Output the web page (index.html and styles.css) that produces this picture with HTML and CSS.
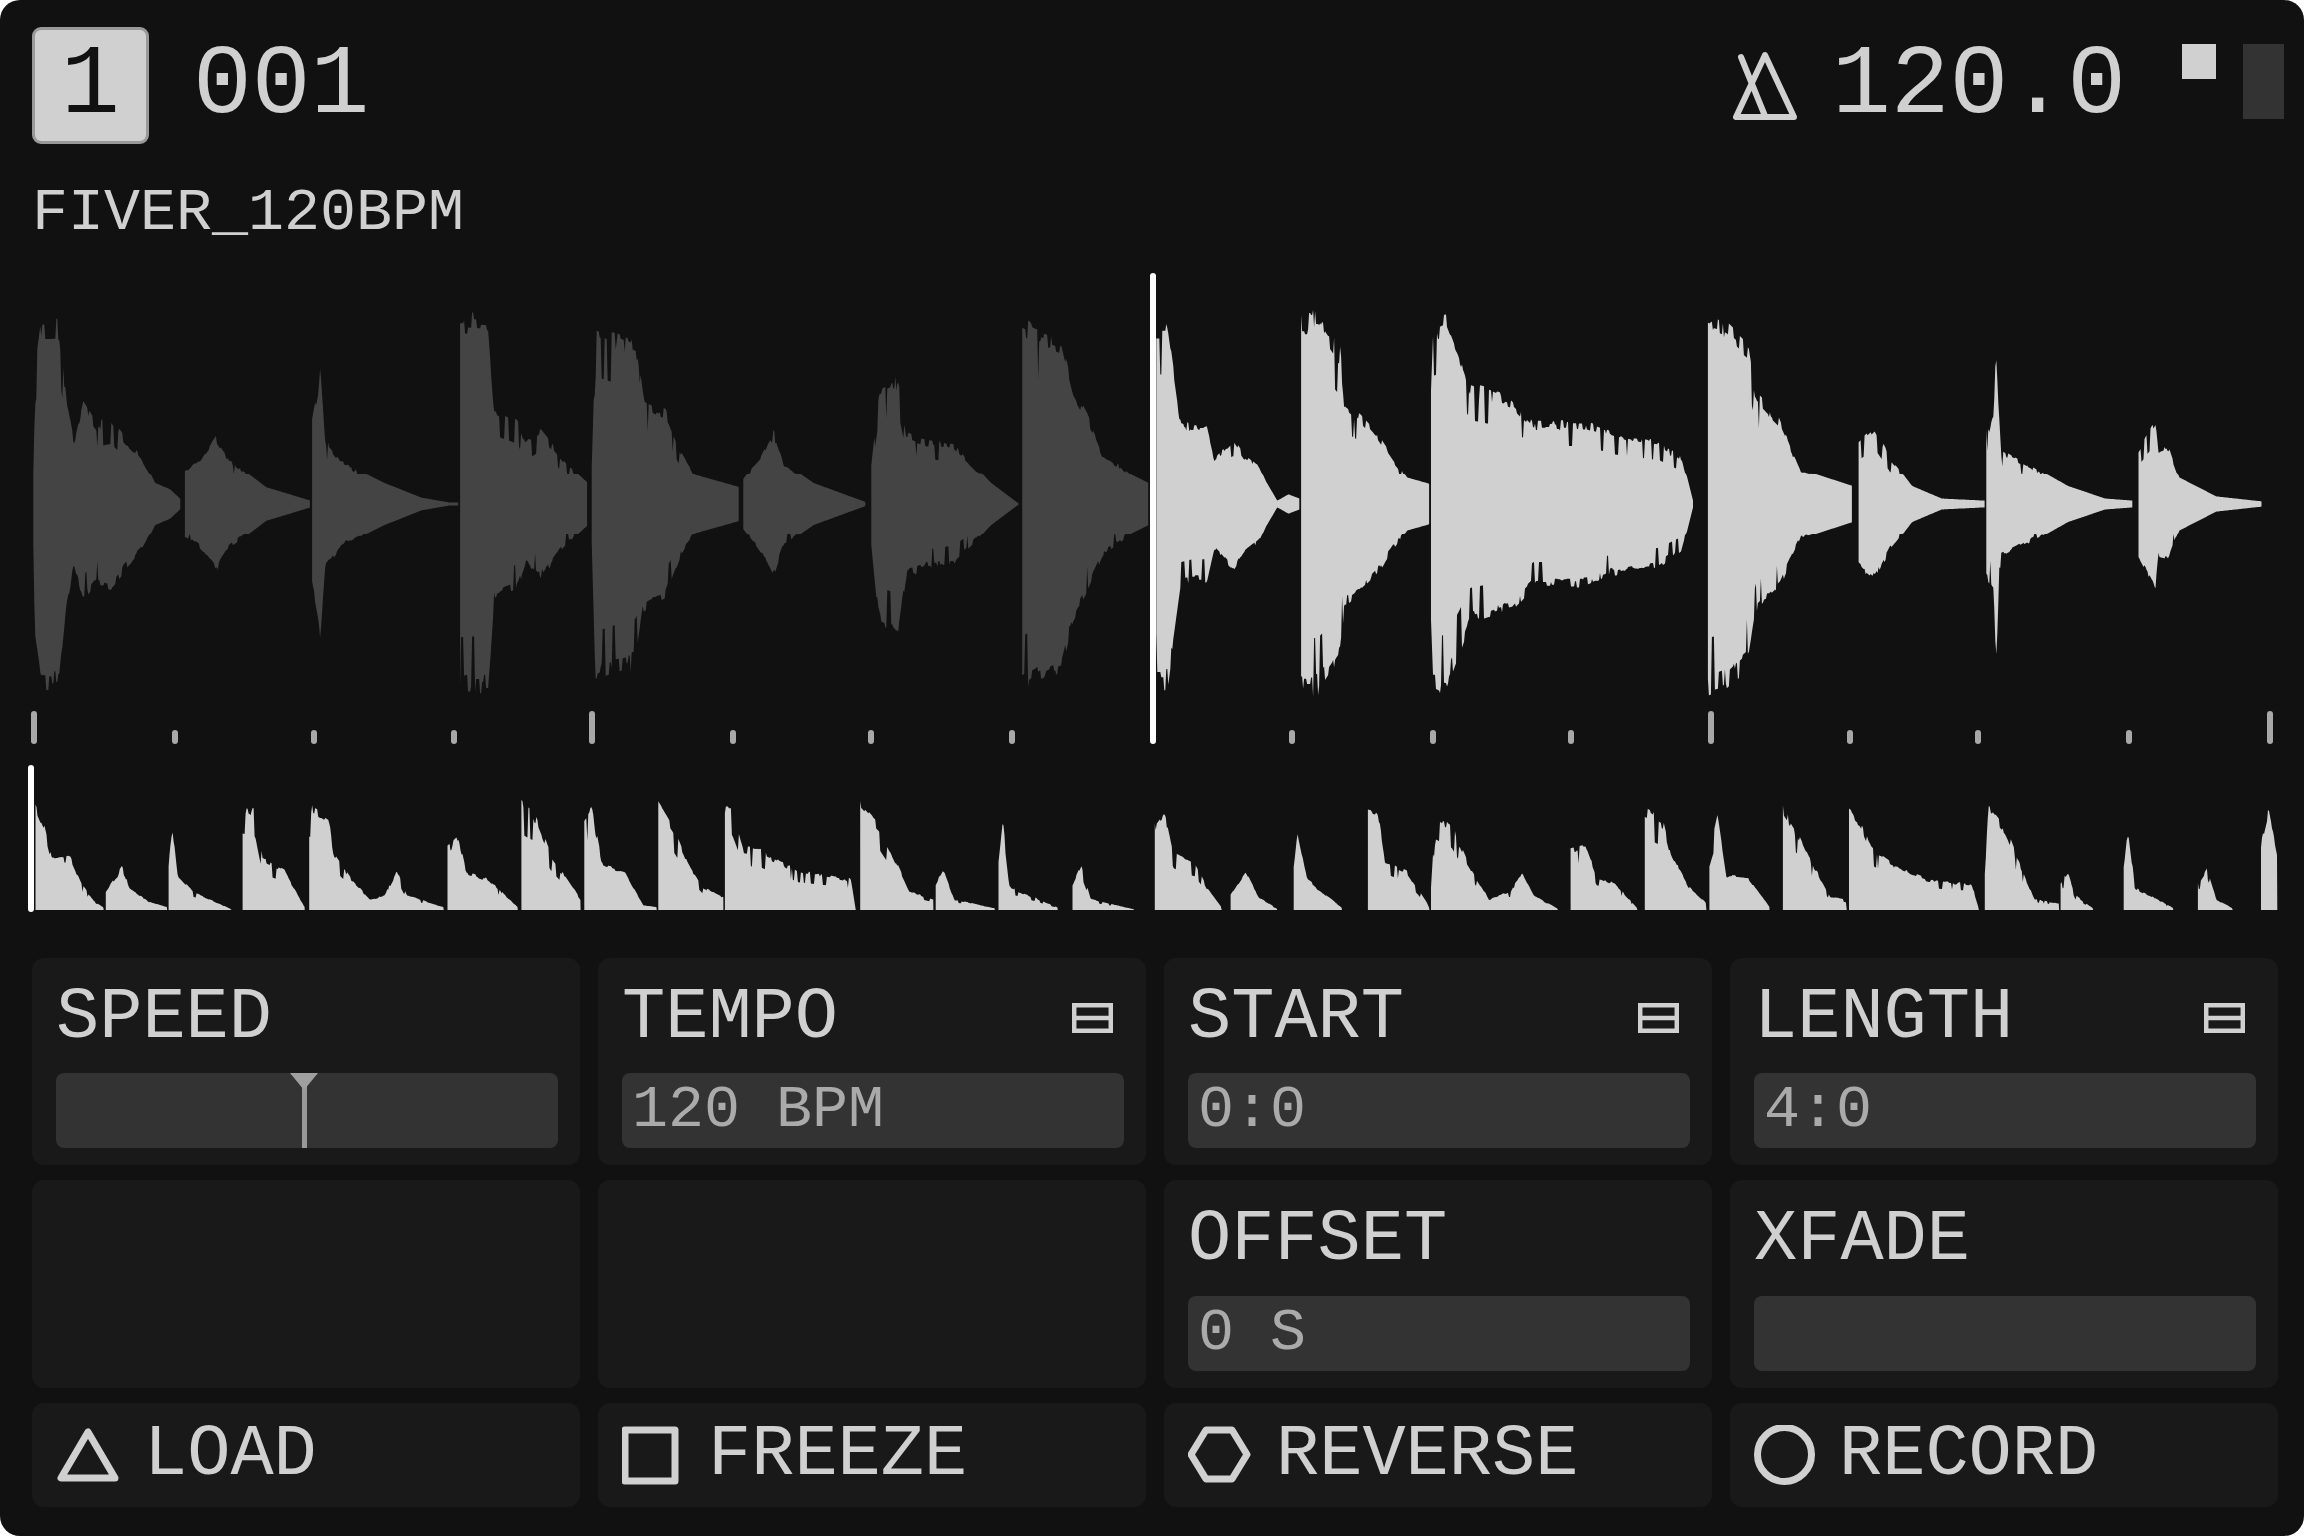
FILE: index.html
```html
<!DOCTYPE html>
<html lang="en">
<head>
  <meta charset="UTF-8">
  <title>FIVER_120BPM</title>
  <link rel="stylesheet" href="styles.css">
</head>
<body>
  <div class="screen">
    <header class="top-bar">
      <div class="track-btn">1</div>
      <div class="big-num pattern">001</div>
      <svg class="metronome" viewBox="0 0 64 72">
        <path d="M32 5 L3 67 L61 67 Z M8 7 L32 66"/>
      </svg>
      <div class="big-num">120.0</div>
      <div class="levels">
        <div class="level-dot"></div>
        <div class="level-bar"></div>
      </div>
    </header>

    <div class="sample-name">FIVER_120BPM</div>

    <svg class="wave" viewBox="0 270 2304 476">
      <path id="waveDim" class="wave-dim"/>
      <path id="waveLit" class="wave-lit"/>
      <g class="ticks">
        <rect x="31" y="711" width="6" height="33" rx="3"/>
        <rect x="172" y="730" width="6" height="14" rx="3"/>
        <rect x="311" y="730" width="6" height="14" rx="3"/>
        <rect x="451" y="730" width="6" height="14" rx="3"/>
        <rect x="589" y="711" width="6" height="33" rx="3"/>
        <rect x="730" y="730" width="6" height="14" rx="3"/>
        <rect x="868" y="730" width="6" height="14" rx="3"/>
        <rect x="1009" y="730" width="6" height="14" rx="3"/>
        <rect x="1289" y="730" width="6" height="14" rx="3"/>
        <rect x="1430" y="730" width="6" height="14" rx="3"/>
        <rect x="1568" y="730" width="6" height="14" rx="3"/>
        <rect x="1708" y="711" width="6" height="33" rx="3"/>
        <rect x="1847" y="730" width="6" height="14" rx="3"/>
        <rect x="1975" y="730" width="6" height="14" rx="3"/>
        <rect x="2126" y="730" width="6" height="14" rx="3"/>
        <rect x="2267" y="711" width="6" height="33" rx="3"/>
      </g>
      <rect class="playhead" x="1150" y="273" width="6" height="471" rx="3"/>
    </svg>

    <svg class="mini-wave" viewBox="0 760 2304 155">
      <path id="miniWave" class="wave-lit"/>
      <rect class="playhead" x="28" y="765" width="6" height="147" rx="3"/>
    </svg>

    <div class="controls">
      <div class="card">
        <div class="card-title"><span>SPEED</span></div>
        <div class="field slider">
          <div class="slider-mark"></div>
        </div>
      </div>
      <div class="card">
        <div class="card-title">
          <span>TEMPO</span>
          <svg class="mode-icon" viewBox="0 0 41 30"><path d="M2.2 2.2 H38.8 V27.8 H2.2 Z M2 15 H39"/></svg>
        </div>
        <div class="field">120 BPM</div>
      </div>
      <div class="card">
        <div class="card-title">
          <span>START</span>
          <svg class="mode-icon" viewBox="0 0 41 30"><path d="M2.2 2.2 H38.8 V27.8 H2.2 Z M2 15 H39"/></svg>
        </div>
        <div class="field">0:0</div>
      </div>
      <div class="card">
        <div class="card-title">
          <span>LENGTH</span>
          <svg class="mode-icon" viewBox="0 0 41 30"><path d="M2.2 2.2 H38.8 V27.8 H2.2 Z M2 15 H39"/></svg>
        </div>
        <div class="field">4:0</div>
      </div>

      <div class="card"></div>
      <div class="card"></div>
      <div class="card">
        <div class="card-title"><span>OFFSET</span></div>
        <div class="field">0 S</div>
      </div>
      <div class="card">
        <div class="card-title"><span>XFADE</span></div>
        <div class="field"></div>
      </div>

      <div class="card action">
        <svg class="action-icon" width="64" height="60" viewBox="0 0 64 60"><path d="M32 7 L5 53 H59 Z"/></svg>
        <span>LOAD</span>
      </div>
      <div class="card action">
        <svg class="action-icon" width="62" height="60" viewBox="0 0 62 60"><rect x="3" y="5" width="50" height="51"/></svg>
        <span>FREEZE</span>
      </div>
      <div class="card action">
        <svg class="action-icon" width="64" height="60" viewBox="0 0 64 60"><path d="M3 29.5 L18 5 H44 L59 29.5 L44 54 H18 Z"/></svg>
        <span>REVERSE</span>
      </div>
      <div class="card action">
        <svg class="action-icon" width="61" height="60" viewBox="0 0 61 60"><circle cx="30.5" cy="29.5" r="27"/></svg>
        <span>RECORD</span>
      </div>
    </div>
  </div>

  <script src="waveform.js"></script>
</body>
</html>
```

FILE: styles.css
```css
html, body {
  margin: 0;
  padding: 0;
  background-color: #fff;
}

.screen {
  width: 2304px;
  height: 1536px;
  box-sizing: border-box;
  background-color: #111;
  border-radius: 20px;
  color: #d0d0d0;
  font-family: "Liberation Mono", monospace;
  overflow: hidden;
}

.top-bar {
  display: flex;
  align-items: center;
  height: 117px;
  padding: 27px 20px 0 32px;
}

.track-btn {
  width: 117px;
  height: 117px;
  box-sizing: border-box;
  display: flex;
  justify-content: center;
  align-items: center;
  background-color: #d0d0d0;
  border: 3px solid #999;
  border-radius: 9px;
  color: #111;
  font-size: 98px;
}

.big-num {
  font-size: 98px;
  line-height: 117px;
}

.pattern {
  margin-left: 44px;
  margin-right: auto;
}

.metronome {
  width: 64px;
  height: 72px;
  margin-right: 35px;
}

.metronome path {
  fill: none;
  stroke: #d0d0d0;
  stroke-width: 6;
  stroke-linejoin: round;
  stroke-linecap: round;
}

.levels {
  display: flex;
  align-items: flex-start;
  gap: 27px;
  align-self: flex-start;
  margin-top: 17px;
  margin-left: 56px;
}

.level-dot {
  width: 34px;
  height: 35px;
  background-color: #d0d0d0;
}

.level-bar {
  width: 41px;
  height: 75px;
  background-color: #333;
}

.sample-name {
  margin: 39px 0 0 32px;
  font-size: 60px;
  line-height: 60px;
}

.wave {
  display: block;
  width: 2304px;
  height: 476px;
  margin-top: 27px;
}

.mini-wave {
  display: block;
  width: 2304px;
  height: 155px;
  margin-top: 14px;
}

.wave-dim {
  fill: #444;
}

.wave-lit {
  fill: #d0d0d0;
}

.ticks rect {
  fill: #a8a8a8;
}

.playhead {
  fill: #fff;
}

.controls {
  display: grid;
  grid-template-columns: repeat(4, 548px);
  grid-template-rows: 207px 208px 104px;
  column-gap: 18px;
  row-gap: 15px;
  margin: 43px 0 0 32px;
}

.card {
  display: flex;
  flex-direction: column;
  box-sizing: border-box;
  padding: 24px 22px 17px 24px;
  background-color: #191919;
  border-radius: 12px;
}

.card-title {
  display: flex;
  justify-content: space-between;
  align-items: center;
  padding-right: 0;
  font-size: 72px;
  line-height: 72px;
}

.mode-icon {
  width: 41px;
  height: 30px;
  margin-right: 11px;
}

.mode-icon path {
  fill: none;
  stroke: #d0d0d0;
  stroke-width: 4.5;
}

.field {
  height: 75px;
  margin-top: auto;
  padding-left: 10px;
  background-color: #333;
  border-radius: 8px;
  color: #aaa;
  font-size: 60px;
  line-height: 75px;
}

.slider {
  position: relative;
  padding-left: 0;
}

.slider-mark {
  position: absolute;
  left: 246px;
  top: 0;
  bottom: 0;
  width: 5px;
  background-color: #999;
}

.slider-mark::before {
  content: "";
  position: absolute;
  left: -12px;
  top: 0;
  border-left: 14.5px solid transparent;
  border-right: 14.5px solid transparent;
  border-top: 17px solid #a0a0a0;
}

.action {
  flex-direction: row;
  align-items: center;
  gap: 24px;
  padding: 0 24px;
  font-size: 72px;
}

.action-icon * {
  fill: none;
  stroke: #d0d0d0;
  stroke-width: 7;
  stroke-linejoin: round;
}
```

FILE: waveform.js
```js
// envelopes traced off the sample, one list per hit
// left half: x/1.352, right half: x/1.347+1140, y/2.376+280
var leftHits = [
  [[45,430],[47,190],[55,80],[80,80],[90,270],[100,370],[112,280],[130,330],[150,320],[170,370],[190,410],[210,480],[230,495],[245,520]],
  [[250,450],[270,420],[292,360],[310,420],[330,450],[360,490],[420,522]],
  [[422,320],[430,240],[433,170],[440,370],[460,420],[480,445],[520,480],[570,515],[620,530]],
  [[622,65],[660,70],[668,290],[700,320],[710,380],[730,345],[770,440],[795,480]],
  [[800,430],[805,85],[860,130],[870,270],[900,300],[920,400],[940,460],[1000,490]],
  [[1005,470],[1030,410],[1046,350],[1060,430],[1100,480],[1170,525]],
  [[1178,430],[1188,240],[1215,215],[1225,350],[1250,370],[1290,385],[1340,480],[1378,530]],
  [[1382,70],[1410,100],[1435,120],[1450,240],[1470,310],[1490,400],[1530,460],[1553,480]]
];
var rightHits = [
  [[22,80],[37,80],[55,330],[70,340],[90,340],[100,420],[125,365],[140,410],[160,440],[170,480],[185,525],[200,510],[215,520]],
  [[217,65],[240,65],[270,155],[275,280],[300,320],[320,360],[340,420],[360,470],[390,485]],
  [[392,240],[395,85],[412,70],[430,160],[445,240],[465,250],[500,270],[530,330],[600,330],[640,360],[700,380],[730,420],[745,525]],
  [[765,65],[790,80],[820,135],[830,260],[860,320],[890,450],[960,490]],
  [[968,380],[990,340],[1010,420],[1040,490],[1080,520],[1138,525]],
  [[1140,350],[1150,320],[1153,150],[1160,400],[1200,440],[1250,490],[1300,520],[1338,525]],
  [[1345,400],[1368,320],[1372,400],[1385,390],[1400,470],[1450,515],[1512,527]]
];

var miniLeft = [
  [[48,1235],[60,1290],[70,1370],[95,1365],[110,1430],[130,1480],[140,1490]],
  [[143,1450],[165,1390],[175,1440],[200,1475],[226,1490]],
  [[228,1380],[233,1290],[240,1410],[260,1450],[313,1495]],
  [[328,1230],[345,1240],[355,1370],[385,1400],[412,1490]],
  [[418,1240],[445,1270],[450,1350],[475,1420],[500,1470],[520,1460],[537,1395],[550,1460],[600,1490]],
  [[605,1340],[620,1315],[630,1400],[660,1420],[700,1490]],
  [[705,1232],[725,1260],[745,1360],[785,1470]],
  [[790,1265],[800,1238],[815,1385],[845,1400],[870,1485],[888,1490]],
  [[890,1230],[910,1290],[930,1380],[950,1440],[978,1465]],
  [[980,1235],[990,1235],[1005,1340],[1030,1350],[1080,1400],[1150,1420],[1157,1495]],
  [[1163,1232],[1190,1290],[1215,1390],[1230,1450],[1262,1470]],
  [[1265,1430],[1275,1390],[1290,1470],[1345,1493]],
  [[1350,1380],[1356,1280],[1365,1440],[1430,1490]],
  [[1450,1430],[1462,1380],[1475,1470],[1533,1495]]
];
var miniRight = [
  [[20,1280],[33,1245],[45,1350],[60,1370],[75,1380],[90,1440],[110,1490]],
  [[122,1460],[142,1400],[160,1465],[185,1493]],
  [[207,1390],[212,1300],[225,1420],[272,1492]],
  [[307,1240],[320,1245],[330,1370],[360,1400],[390,1490]],
  [[392,1440],[398,1250],[420,1280],[440,1370],[470,1470],[500,1450],[515,1400],[530,1460],[563,1494]],
  [[580,1340],[600,1330],[615,1410],[640,1430],[670,1493]],
  [[680,1245],[705,1275],[715,1355],[740,1440],[763,1480]],
  [[767,1345],[778,1250],[790,1410],[820,1415],[848,1490]],
  [[866,1240],[885,1300],[900,1360],[930,1465],[952,1470]],
  [[955,1245],[970,1270],[985,1340],[1020,1390],[1060,1420],[1120,1430],[1130,1495]],
  [[1138,1400],[1143,1240],[1165,1290],[1185,1380],[1205,1470],[1238,1480]],
  [[1240,1430],[1250,1400],[1260,1460],[1284,1493]],
  [[1325,1390],[1331,1290],[1340,1440],[1392,1492]],
  [[1425,1430],[1438,1390],[1450,1470],[1472,1493]],
  [[1510,1330],[1520,1245],[1532,1360]]
];

var seed = 7;
function rnd() {
  seed = (seed * 16807) % 2147483647;
  return seed / 2147483647;
}

// held noise so the edge comes out in little steps, with a few thin notches
function jitter(x, hold) {
  if (x >= hold.until) {
    var r = rnd();
    hold.until = x + 1 + Math.floor(rnd() * 4);
    if (r < 0.1) {
      hold.value = 0.68;
    } else {
      hold.value = 1 - r * 0.14;
    }
  }
  return hold.value;
}

function envelope(points, x) {
  for (var i = 1; i < points.length; i++) {
    if (x <= points[i][0]) {
      var a = points[i - 1];
      var b = points[i];
      var t = (x - a[0]) / (b[0] - a[0] || 1);
      return a[1] + (b[1] - a[1]) * t;
    }
  }
  return points[points.length - 1][1];
}

function mapHit(hit, scaleX, offsetX, centre) {
  return hit.map(function(p) {
    return [p[0] / scaleX + offsetX, (Math.abs(centre - p[1])) / 2.376];
  });
}

function mirrored(hit) {
  var top = [];
  var bottom = [];
  var holdTop = { until: 0, value: 1 };
  var holdBottom = { until: 0, value: 1 };
  var start = hit[0][0];
  var end = hit[hit.length - 1][0];
  for (var x = start; x <= end; x++) {
    var amp = envelope(hit, x);
    var solid = Math.min(amp, 30);
    var up = Math.max(solid, amp * jitter(x, holdTop));
    var down = Math.max(solid, amp * jitter(x, holdBottom));
    top.push(x.toFixed(1) + ' ' + (504 - Math.max(up, 1.5)).toFixed(1));
    bottom.unshift(x.toFixed(1) + ' ' + (504 + Math.max(down, 1.5)).toFixed(1));
  }
  return 'M' + top.join('L') + 'L' + bottom.join('L') + 'Z';
}

function oneSided(hit) {
  var line = [];
  var hold = { until: 0, value: 1 };
  var start = hit[0][0];
  var end = hit[hit.length - 1][0];
  for (var x = start; x <= end; x++) {
    var amp = envelope(hit, x);
    line.push(x.toFixed(1) + ' ' + (910 - amp * jitter(x, hold)).toFixed(1));
  }
  return 'M' + start.toFixed(1) + ' 910L' + line.join('L') + 'L' + end.toFixed(1) + ' 910Z';
}

var dim = leftHits.map(function(h) { return mirrored(mapHit(h, 1.352, 0, 530)); });
var lit = rightHits.map(function(h) { return mirrored(mapHit(h, 1.347, 1140, 533)); });
var mini = miniLeft.map(function(h) { return oneSided(mapHit(h, 1.352, 0, 1497)); })
  .concat(miniRight.map(function(h) { return oneSided(mapHit(h, 1.347, 1140, 1497)); }));

document.getElementById('waveDim').setAttribute('d', dim.join(''));
document.getElementById('waveLit').setAttribute('d', lit.join(''));
document.getElementById('miniWave').setAttribute('d', mini.join(''));
```
